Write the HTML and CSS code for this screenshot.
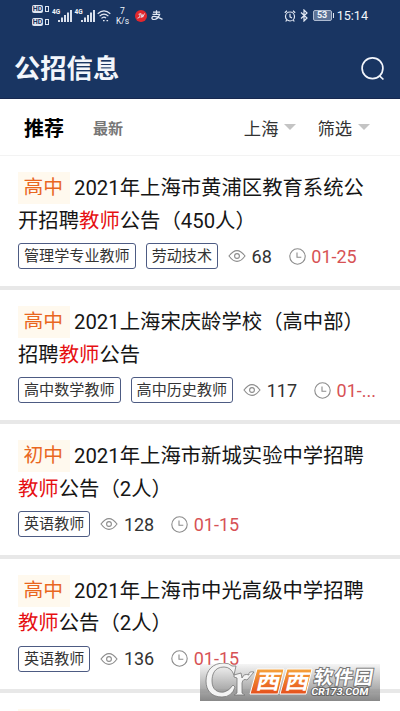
FILE: index.html
```html
<!DOCTYPE html>
<html lang="zh-CN">

<head>
  <meta charset="UTF-8">
  <title>公招信息</title>
  <link rel="stylesheet" href="styles.css">
</head>

<body>
  <!-- 图标定义 -->
  <svg class="defs" width="0" height="0">
    <symbol id="eye" viewBox="0 0 18 14">
      <path d="M1 7Q9-3.8 17 7Q9 17.8 1 7Z" />
      <circle cx="9" cy="7" r="2.4" />
    </symbol>
    <symbol id="clock" viewBox="0 0 17 17">
      <circle cx="8.5" cy="8.5" r="7.7" />
      <path d="M8 4.5V9.3H12.3" />
    </symbol>
    <symbol id="signal" viewBox="0 0 20 14">
      <path d="M7 13v-2M10 13V8.5M13 13V6M16 13V3.5M19 13V1" />
    </symbol>
  </svg>

  <!-- 顶部：状态栏和标题 -->
  <header>
    <div class="status-bar">
      <div class="hd">
        <div><b>HD</b><i></i></div>
        <div><b>HD</b><i></i></div>
      </div>
      <div class="signal"><span>4G</span><svg width="20" height="14"><use href="#signal" /></svg></div>
      <div class="signal"><span>4G</span><svg width="20" height="14"><use href="#signal" /></svg></div>
      <svg class="wifi" width="14" height="12" viewBox="0 0 14 12">
        <path d="M.7 3.7Q7-1.9 13.3 3.7M2.6 6.1Q7 2 11.4 6.1M4.5 8.4Q7 6 9 8.2" />
        <path d="M6 10.7h1.6M9.5 10.7h1.6" />
      </svg>
      <div class="speed">7<br>K/s</div>
      <svg class="news" width="12" height="12" viewBox="0 0 12 12">
        <circle cx="6" cy="6" r="6" fill="#e2272d" stroke="none" />
        <path d="M2.5 8.2L4.7 7.2L5.2 3.7M3.5 4.3L6.3 3.6M6 8L7 4.3L7.7 7.2L9.5 3.5" />
      </svg>
      <svg class="pay" width="12" height="11" viewBox="0 0 12 11">
        <path d="M2 2.2h7M5.5.2v4M1.5 4.3h7.2Q7 9.5 3 9.5C0 9.5.3 6.2 3.2 6.4Q6 6.6 11.5 9.4" />
      </svg>
      <div class="status-right">
        <svg width="12" height="12" viewBox="0 0 12 12">
          <circle cx="6" cy="6.5" r="4.5" />
          <path d="M6 3.8v3l2 1.3M.8 2.7L3 .8M11.2 2.7L9 .8M2.7 10.2L1.7 11.5M9.3 10.2l1 1.3" />
        </svg>
        <svg width="8" height="13" viewBox="0 0 8 13">
          <path d="M1 3.5L7 9L4 12V1L7 4L1 9.5" />
        </svg>
        <div class="battery">53</div>
        <span class="time">15:14</span>
      </div>
    </div>
    <div class="title-bar">
      <h1>公招信息</h1>
      <svg width="24" height="24" viewBox="0 0 24 24">
        <circle cx="11.5" cy="11.3" r="10.4" />
        <path d="M18.3 18.7L22.4 22.5" />
      </svg>
    </div>
  </header>

  <!-- 标签和筛选 -->
  <nav>
    <span class="tab-active">推荐</span>
    <span class="tab">最新</span>
    <span class="filter">上海</span>
    <span class="filter">筛选</span>
  </nav>

  <!-- 公告列表 -->
  <main>
    <article class="card">
      <h2><span class="level">高中</span>2021年上海市黄浦区教育系统公<br>开招聘<em>教师</em>公告（450人）</h2>
      <div class="info">
        <span class="tag">管理学专业教师</span>
        <span class="tag">劳动技术</span>
        <span class="views"><svg width="18" height="14"><use href="#eye" /></svg>68</span>
        <span class="date"><svg width="17" height="17"><use href="#clock" /></svg>01-25</span>
      </div>
    </article>
    <article class="card">
      <h2><span class="level">高中</span>2021上海宋庆龄学校（高中部）<br>招聘<em>教师</em>公告</h2>
      <div class="info">
        <span class="tag">高中数学教师</span>
        <span class="tag">高中历史教师</span>
        <span class="views"><svg width="18" height="14"><use href="#eye" /></svg>117</span>
        <span class="date"><svg width="17" height="17"><use href="#clock" /></svg>01-...</span>
      </div>
    </article>
    <article class="card">
      <h2><span class="level">初中</span>2021年上海市新城实验中学招聘<br><em>教师</em>公告（2人）</h2>
      <div class="info">
        <span class="tag">英语教师</span>
        <span class="views"><svg width="18" height="14"><use href="#eye" /></svg>128</span>
        <span class="date"><svg width="17" height="17"><use href="#clock" /></svg>01-15</span>
      </div>
    </article>
    <article class="card">
      <h2><span class="level">高中</span>2021年上海市中光高级中学招聘<br><em>教师</em>公告（2人）</h2>
      <div class="info">
        <span class="tag">英语教师</span>
        <span class="views"><svg width="18" height="14"><use href="#eye" /></svg>136</span>
        <span class="date"><svg width="17" height="17"><use href="#clock" /></svg>01-15</span>
      </div>
    </article>
    <!-- 下一条只露出标签的上边 -->
    <article class="card-next">
      <span></span>
    </article>
  </main>

  <!-- 右下角水印 -->
  <div class="watermark">
    <svg width="180" height="38" viewBox="0 0 180 38">
      <defs>
        <linearGradient id="orange" x1="0" y1="0" x2="0" y2="1">
          <stop offset="0" stop-color="#f6a33a" />
          <stop offset="1" stop-color="#e5501c" />
        </linearGradient>
      </defs>
      <g fill="#f4f4f4" stroke="#777" stroke-width=".8">
        <path d="M36 3L34 12Q31 4 24 4C14 4 12 12 12 18C12 27 18 30 24 29Q29 28 33 22L35 24Q32 34 22 34C11 34 6 27 6 18C6 7 13 0 24 0Q29 0 32 3Z" />
        <path d="M34 12L41 10L42 15Q44 10 49 12Q48 8 54 9L47 17Q43 15 42 20V30L45 32H34L37 30V15L34 14Z" />
      </g>
      <g fill="url(#orange)" stroke="#fff" stroke-width="1">
        <path d="M57 6H84L78 31H50Z" />
        <path d="M87 6H112L106 31H80Z" />
      </g>
      <g class="wm-xi">
        <text transform="translate(55 26) skewX(-13) scale(1.1 .95)">西</text>
        <text transform="translate(84 26) skewX(-13) scale(1.1 .95)">西</text>
      </g>
      <text class="wm-name" transform="translate(113 21) skewX(-10)" textLength="59">软件园</text>
      <text class="wm-url" transform="translate(111 32) skewX(-8)" textLength="57" lengthAdjust="spacingAndGlyphs">CR173.COM</text>
    </svg>
  </div>
</body>

</html>
```
FILE: styles.css
```css
/* 页面基本样式 */
html,
body {
  margin: 0;
  padding: 0;
  height: 711px;
  overflow: hidden;
  color: #161616;
  background-color: white;
  font-family: Roboto, "Noto Sans CJK SC", sans-serif;
}

* {
  box-sizing: border-box;
}

svg {
  display: block;
  flex: none;
  fill: none;
}

.defs {
  position: absolute;
}

/* 顶部 */
header {
  height: 99px;
  color: #f2f5fb;
  background-color: #193562;
  border-bottom: 1px solid #17284f;
}

.status-bar {
  display: flex;
  align-items: center;
  height: 31px;
  padding: 0 32px;
}

.status-bar svg {
  stroke: #e3e9f4;
  stroke-width: 1.2;
}

.hd {
  display: flex;
  flex-direction: column;
  gap: 5px;
  width: 20px;
}

.hd div {
  display: flex;
  align-items: center;
  gap: 2px;
}

.hd b {
  width: 11px;
  height: 8px;
  border-radius: 2px;
  font-size: 7px;
  line-height: 8px;
  text-align: center;
  color: #193562;
  background-color: #dfe6f1;
}

.hd i {
  width: 4px;
  height: 6px;
  border: 1px solid #dfe6f1;
}

.signal {
  display: flex;
  width: 22.5px;
}

.signal span {
  width: 0;
  font-size: 6.5px;
  font-weight: bold;
  line-height: 7px;
}

.signal svg {
  width: 20px;
  stroke-width: 1.9;
}

.wifi {
  margin-top: 1px;
}

.speed {
  width: 13px;
  margin-left: 5px;
  font-size: 8.5px;
  line-height: 10px;
  text-align: center;
}

.status-bar .news {
  margin-left: 6px;
  stroke-width: .9;
}

.status-bar .pay {
  margin-left: 4px;
}

.status-right {
  display: flex;
  align-items: center;
  gap: 4px;
  margin-left: auto;
}

.battery {
  position: relative;
  width: 19px;
  height: 11px;
  margin: 0 1px 0 1px;
  border: 1px solid #aebbd1;
  border-radius: 2px;
  font-size: 9px;
  font-weight: bold;
  line-height: 9px;
  text-align: center;
  background-color: #5d7397;
}

.battery::after {
  content: "";
  position: absolute;
  top: 2px;
  right: -3px;
  width: 1px;
  height: 5px;
  background-color: #dfe6f1;
}

.time {
  font-size: 12.6px;
}

.title-bar {
  display: flex;
  justify-content: space-between;
  align-items: center;
  height: 75px;
  padding: 0 15px 0 14px;
}

.title-bar h1 {
  margin: 0;
  font-size: 26.3px;
  font-weight: bold;
  line-height: 40px;
}

.title-bar svg {
  stroke: #f2f5fb;
  stroke-width: 1.7;
}

/* 标签和筛选 */
nav {
  display: flex;
  align-items: center;
  height: 57px;
  padding: 0 30px 0 24px;
  border-bottom: 1px solid #f3f3f3;
}

.tab-active {
  font-size: 20px;
  font-weight: bold;
  color: #000;
}

.tab {
  margin-left: 29px;
  margin-right: auto;
  font-size: 15px;
  font-weight: bold;
  color: #777;
}

.filter {
  display: flex;
  align-items: center;
  margin-left: 21px;
  font-size: 17.3px;
  color: #333;
}

.filter::after {
  content: "";
  margin-left: 6px;
  border: 6px solid transparent;
  border-top-color: #c4c4c4;
  border-bottom: none;
}

/* 公告卡片 */
main {
  height: 555px;
  overflow: hidden;
}

.card {
  height: 134.2px;
  padding: 16px 18px 0;
  border-bottom: 4.6px solid #e8e8e8;
}

.card h2 {
  margin: 0;
  font-size: 20.35px;
  font-weight: normal;
  line-height: 32.5px;
  white-space: nowrap;
}

.card em {
  font-style: normal;
  color: #e60f12;
}

.level {
  display: inline-block;
  width: 52px;
  height: 32px;
  margin-right: 4px;
  padding-left: 5.5px;
  line-height: 32px;
  vertical-align: top;
  font-size: 19.8px;
  color: #e9671f;
  background-color: #fff9ee;
}

.info {
  display: flex;
  align-items: center;
  height: 26px;
  margin-top: 6px;
  font-size: 18px;
  white-space: nowrap;
}

.tag {
  height: 26px;
  margin-right: 10px;
  padding: 0 5px;
  border: 1px solid #4d5b83;
  border-radius: 3px;
  font-size: 15.1px;
  line-height: 24px;
  color: #333;
}

.views,
.date {
  display: flex;
  align-items: center;
  color: #333;
}

.views svg,
.date svg {
  margin-right: 5.5px;
  stroke: #8c8c8c;
  stroke-width: 1.1;
}

.date {
  margin-left: 17px;
  color: #d75255;
}

.card-next {
  padding: 16px 18px 0;
}

.card-next span {
  display: block;
  width: 52px;
  height: 2px;
  background-color: #fff9ee;
}

/* 水印 */
.watermark {
  position: absolute;
  left: 200px;
  top: 663px;
  width: 180px;
  height: 38px;
  background: linear-gradient(rgba(215, 215, 215, .25), #858585) 0 1px no-repeat;
}

.wm-xi {
  fill: #fff;
  font-size: 22px;
  font-weight: bold;
}

.wm-name {
  fill: #fff;
  stroke: #777;
  stroke-width: 2;
  paint-order: stroke;
  font-size: 19px;
  font-weight: bold;
}

.wm-url {
  fill: #fff;
  stroke: #666;
  stroke-width: 2;
  paint-order: stroke;
  font-size: 10px;
  font-weight: bold;
}
```
